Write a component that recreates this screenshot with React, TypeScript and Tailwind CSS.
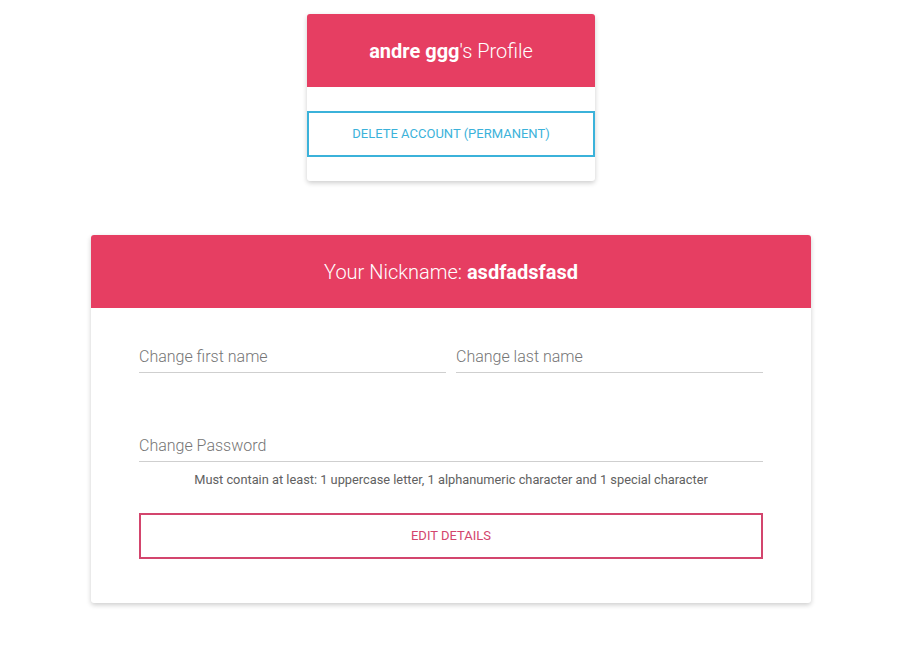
import React from 'react';

const pink = 'bg-[#e63e62]';

function Field({ placeholder, type = 'text' }: { placeholder: string; type?: string }) {
  return (
    <input
      type={type}
      placeholder={placeholder}
      className="h-[33px] w-full border-b border-[#cfcfcf] bg-transparent text-[16px] font-light text-[#333] outline-none placeholder:text-[#757575]"
    />
  );
}

export default function App() {
  return (
    <div className="min-h-[650px] bg-white pr-3 font-['Roboto',sans-serif]">
      <div className="flex flex-col items-center pt-[14px]">
        {/* Profile card */}
        <div className="w-[288px] overflow-hidden rounded-[3px] bg-white shadow-[0_2px_5px_rgba(0,0,0,0.2)]">
          <div className={`${pink} flex h-[73px] items-center justify-center text-[20px] font-light text-white`}>
            <span>
              <b className="font-bold">andre ggg</b>'s Profile
            </span>
          </div>
          <div className="pt-6 pb-6">
            <button className="flex h-[46px] w-full items-center justify-center border-2 border-[#3bb2da] text-[13px] uppercase text-[#3bb2da]">
              Delete account (permanent)
            </button>
          </div>
        </div>

        {/* Details card */}
        <div className="mt-[54px] w-[720px] overflow-hidden rounded-[3px] bg-white shadow-[0_2px_5px_rgba(0,0,0,0.2)]">
          <div className={`${pink} flex h-[73px] items-center justify-center text-[20px] font-light text-white`}>
            <span>
              Your Nickname: <b className="font-bold">asdfadsfasd</b>
            </span>
          </div>
          <div className="px-12 pt-8 pb-[44px]">
            <div className="flex gap-[10px]">
              <Field placeholder="Change first name" />
              <Field placeholder="Change last name" />
            </div>
            <div className="mt-[56px]">
              <Field placeholder="Change Password" type="password" />
            </div>
            <p className="mt-[10px] text-center text-[12.8px] leading-4 text-[#616161]">
              Must contain at least: 1 uppercase letter, 1 alphanumeric character and 1 special character
            </p>
            <button className="mt-[25px] flex h-[46px] w-full items-center justify-center border-2 border-[#d3456d] text-[13px] uppercase text-[#d3456d]">
              Edit details
            </button>
          </div>
        </div>
      </div>
    </div>
  );
}
